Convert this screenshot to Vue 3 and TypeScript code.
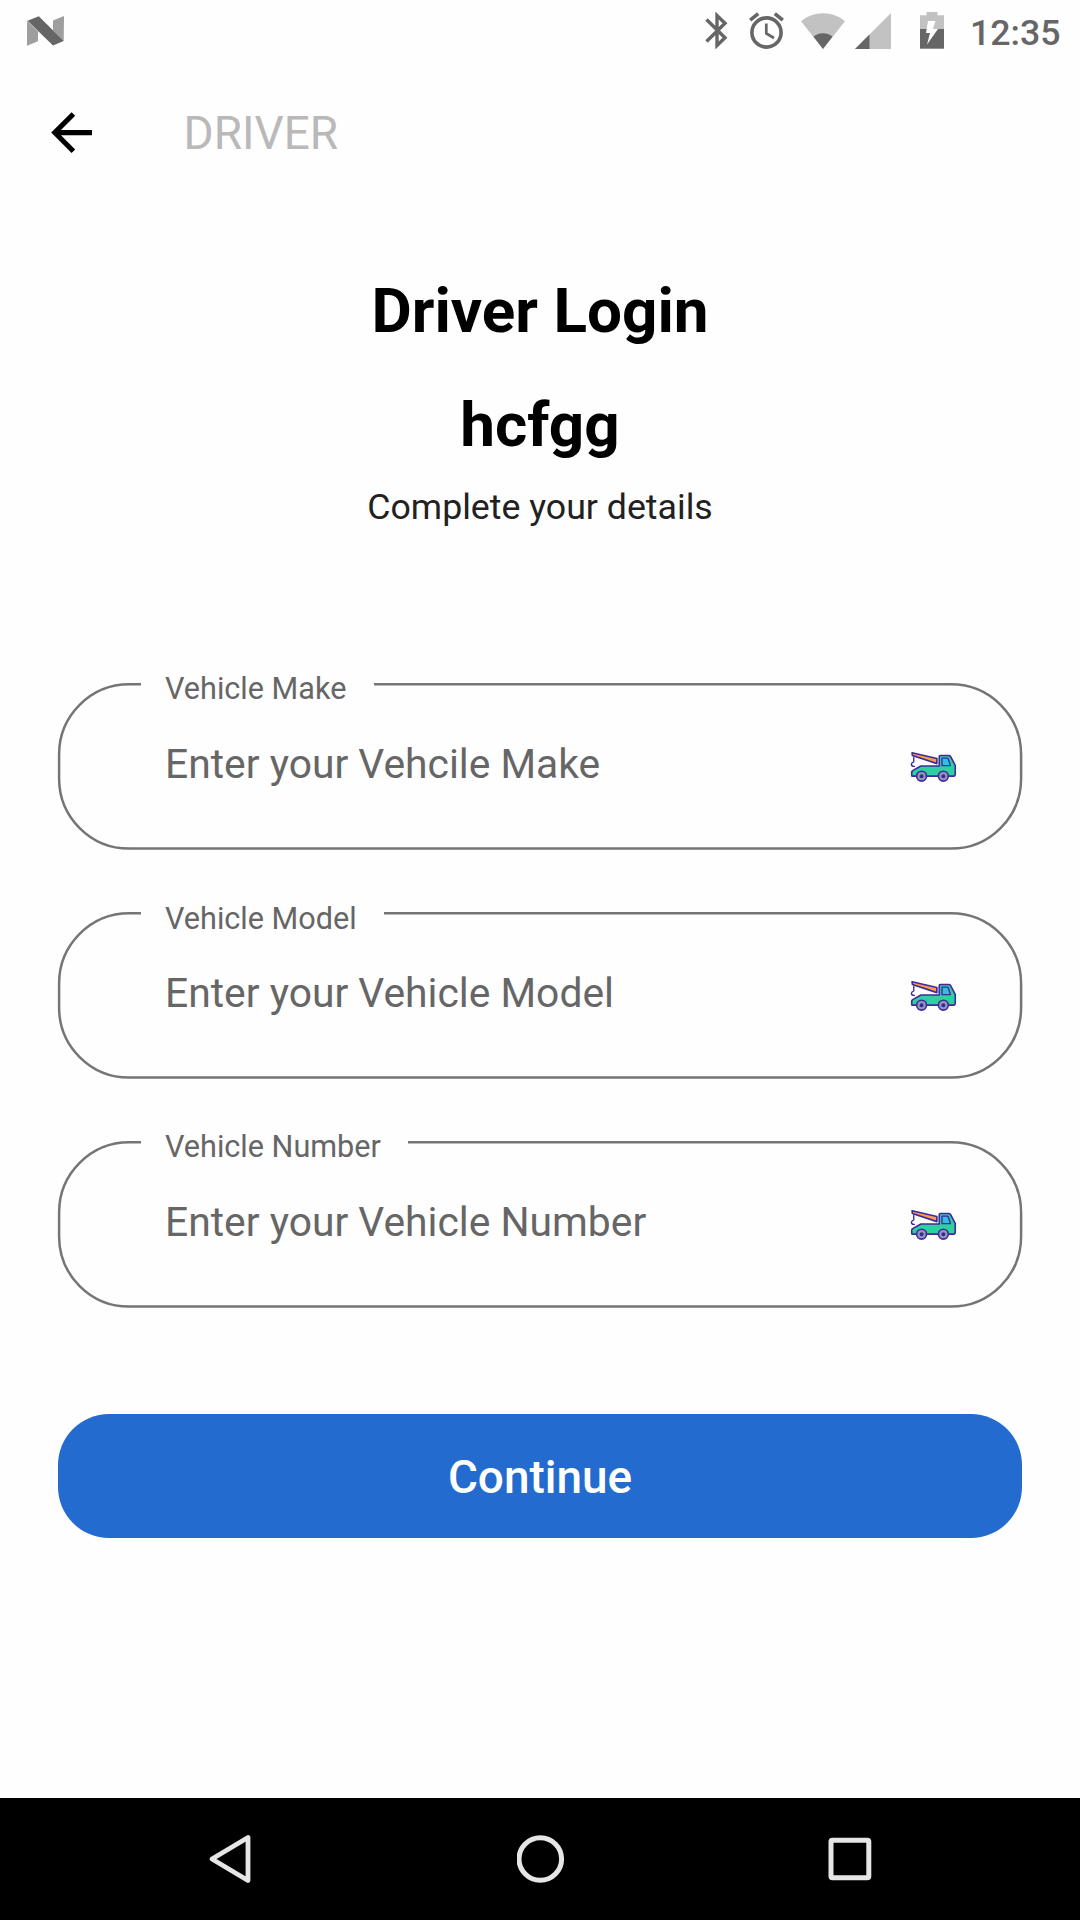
<script setup lang="ts">
interface Field {
  id: string
  label: string
  placeholder: string
}

const fields: Field[] = [
  { id: 'make', label: 'Vehicle Make', placeholder: 'Enter your Vehcile Make' },
  { id: 'model', label: 'Vehicle Model', placeholder: 'Enter your Vehicle Model' },
  { id: 'number', label: 'Vehicle Number', placeholder: 'Enter your Vehicle Number' },
]
</script>

<template>
  <div class="screen">
    <header class="status">
      <svg class="nougat" width="37" height="30" viewBox="0 0 37 30">
        <path d="M0 4.8L11 15.5V25.3L0 29.8Z" fill="#9e9e9e" />
        <path d="M37 0L26 4.6V14.5L36.7 25Z" fill="#9e9e9e" />
        <path d="M0.5 4.8L11.8 0.2L36.7 25L26 29.6Z" fill="#666" />
      </svg>
      <div class="status-icons">
        <svg class="bluetooth" width="23" height="37" viewBox="0 0 23 37">
          <path d="M1.5 7.5L20 25.8L12 33.5V3.5L20 11.2L1.5 29.5" fill="none" stroke="#666" stroke-width="3.4" />
        </svg>
        <svg class="alarm" width="35" height="37" viewBox="0 0 35 37">
          <circle cx="17.5" cy="20.5" r="14.6" fill="none" stroke="#666" stroke-width="3.6" />
          <path d="M1.2 8.2L9.2 1.6M33.8 8.2L25.8 1.6" stroke="#666" stroke-width="3.6" />
          <path d="M17.3 11.5V21.5L25 26" fill="none" stroke="#666" stroke-width="2.7" />
        </svg>
        <svg class="wifi" width="44" height="36" viewBox="0 0 44 36">
          <path d="M22 36L0 8.2C6 3 14 0.2 22 0.2S38 3 44 8.2Z" fill="#c2c2c2" />
          <path d="M22 36L12.4 23.6C15 21.5 18.5 20.3 22 20.3S29 21.5 31.6 23.6Z" fill="#666" />
        </svg>
        <svg class="signal" width="36" height="36" viewBox="0 0 36 36">
          <path d="M0 36L36 0V36Z" fill="#c2c2c2" />
          <path d="M0 36L14.5 21.5V36Z" fill="#666" />
        </svg>
        <svg class="battery" width="24" height="37" viewBox="0 0 24 37">
          <path d="M6.5 0H17.5V3.2H24V17H0V3.2H6.5Z" fill="#c2c2c2" />
          <path d="M0 17H24V36.7H0Z" fill="#666" />
          <path d="M8 9H15.5L12.8 17H18L7 32.5L10 21H6Z" fill="#fff" />
        </svg>
        <span class="clock">12:35</span>
      </div>
    </header>

    <nav class="appbar">
      <svg class="back" width="61.2" height="61.2" viewBox="0 0 24 24">
        <path d="M20 11H7.83l5.59-5.59L12 4l-8 8 8 8 1.41-1.41L7.83 13H20v-2z" />
      </svg>
      <span class="appbar-title">DRIVER</span>
    </nav>

    <main class="content">
      <h1>Driver Login</h1>
      <h2>hcfgg</h2>
      <p class="subtitle">Complete your details</p>

      <form class="fields">
        <div v-for="field in fields" :key="field.id" class="field" :class="field.id">
          <svg class="outline" width="965" height="167" viewBox="0 0 965 167">
            <rect x="2.1" y="1.3" width="962" height="164.3" rx="70.1" fill="none" stroke="#757575" stroke-width="2.5" />
          </svg>
          <label class="label">{{ field.label }}</label>
          <span class="placeholder">{{ field.placeholder }}</span>
          <svg class="truck" width="49" height="34.7" viewBox="30 30 144 102">
            <g stroke="#3f2a9e" stroke-width="4.8" stroke-linejoin="round" stroke-linecap="round">
              <path d="M36 38L109 55V70L37 46Z" fill="#fb9a4b" />
              <path d="M41 52V65Q35 67 34 72Q35 79 43 78" fill="none" stroke-width="4" />
              <path d="M116 77V49Q116 46 119 46H144Q147 46 149 49L163 75V99Q163 107 158 107H37Q35 107 35 104V95Q35 92 39 90L62 77Z" fill="#2fd0a0" />
              <path d="M124 54H139Q142 54 143 57L149 76H124Z" fill="#30bfe0" stroke-width="4" />
              <circle cx="64" cy="107" r="14.5" fill="#8f98b4" />
              <circle cx="128" cy="107" r="14.5" fill="#8f98b4" />
              <circle cx="64" cy="107" r="3.5" />
              <circle cx="128" cy="107" r="3.5" />
            </g>
          </svg>
        </div>
      </form>

      <button class="continue" type="button">Continue</button>
    </main>

    <footer class="navbar">
      <svg width="48" height="50" viewBox="0 0 48 50">
        <path d="M41 3.5V46.5L5 25Z" fill="none" stroke="#e6e6e6" stroke-width="4.8" stroke-linejoin="round" />
      </svg>
      <svg width="48" height="50" viewBox="0 0 48 50">
        <circle cx="23.3" cy="25" r="21.3" fill="none" stroke="#e6e6e6" stroke-width="5" />
      </svg>
      <svg width="48" height="50" viewBox="0 0 48 50">
        <rect x="5" y="6.3" width="37.8" height="37.4" rx="1.5" fill="none" stroke="#e6e6e6" stroke-width="5" />
      </svg>
    </footer>
  </div>
</template>

<style>
body {
  margin: 0;
  background: #fefefe;
}
</style>

<style scoped>
.screen {
  width: 1080px;
  height: 1920px;
  box-sizing: border-box;
  display: flex;
  flex-direction: column;
  background: #fefefe;
  font-family: Roboto, sans-serif;
  overflow: hidden;
}

svg {
  display: block;
  flex: none;
}

.status {
  height: 63px;
  display: flex;
  justify-content: space-between;
  padding: 0 19px 0 27px;
}

.nougat {
  margin-top: 15.5px;
}

.status-icons {
  display: flex;
  align-items: flex-start;
  padding-top: 12px;
}

.alarm {
  margin-left: 21px;
}

.wifi {
  margin-left: 17px;
  margin-top: 0.5px;
}

.signal {
  margin-left: 10px;
  margin-top: 0.5px;
}

.battery {
  margin-left: 29px;
}

.clock {
  margin-left: 26px;
  width: 91px;
  margin-top: -12px;
  font-size: 35.7px;
  line-height: 66px;
  font-weight: 500;
  color: #666;
  white-space: nowrap;
}

.appbar {
  height: 139px;
  display: flex;
  align-items: center;
  padding-left: 41px;
}

.appbar-title {
  margin-left: 81.4px;
  font-size: 45.9px;
  line-height: 56px;
  color: #b9b9b9;
}

.content {
  flex: 1;
  display: flex;
  flex-direction: column;
  padding: 73px 57px 0;
  text-align: center;
}

h1,
h2 {
  margin: 0;
  font-size: 62px;
  line-height: 72px;
  font-weight: 700;
  color: #000;
}

h2 {
  margin-top: 42px;
}

.subtitle {
  margin: 24px 0 0;
  font-size: 35.7px;
  line-height: 44px;
  color: #212121;
}

.fields {
  margin-top: 154px;
  display: flex;
  flex-direction: column;
  gap: 62px;
}

.field {
  position: relative;
  height: 167px;
  display: flex;
  align-items: center;
  justify-content: space-between;
  padding: 0 64.5px 0 108px;
  color: #666;
}

.outline {
  position: absolute;
  left: 0;
  top: 0;
  overflow: visible;
}

.label {
  position: absolute;
  left: 84px;
  top: -13px;
  padding: 0 27.6px 0 24px;
  background: #fefefe;
  font-size: 30.6px;
  line-height: 38px;
  white-space: nowrap;
}

.model .label {
  top: -12px;
}

.placeholder {
  margin-bottom: 5px;
  font-size: 40.8px;
  line-height: 50px;
  white-space: nowrap;
}

.truck {
  margin-top: 1.6px;
}

.continue {
  margin: 106px 1px 0;
  height: 124px;
  padding: 1px 0 0;
  border: 0;
  border-radius: 51px;
  background: #236bcf;
  color: #fff;
  font-family: inherit;
  font-size: 45.9px;
  font-weight: 500;
}

.navbar {
  height: 122px;
  box-sizing: border-box;
  background: #000;
  display: flex;
  justify-content: space-between;
  padding: 36px 206px 0 207px;
}
</style>
